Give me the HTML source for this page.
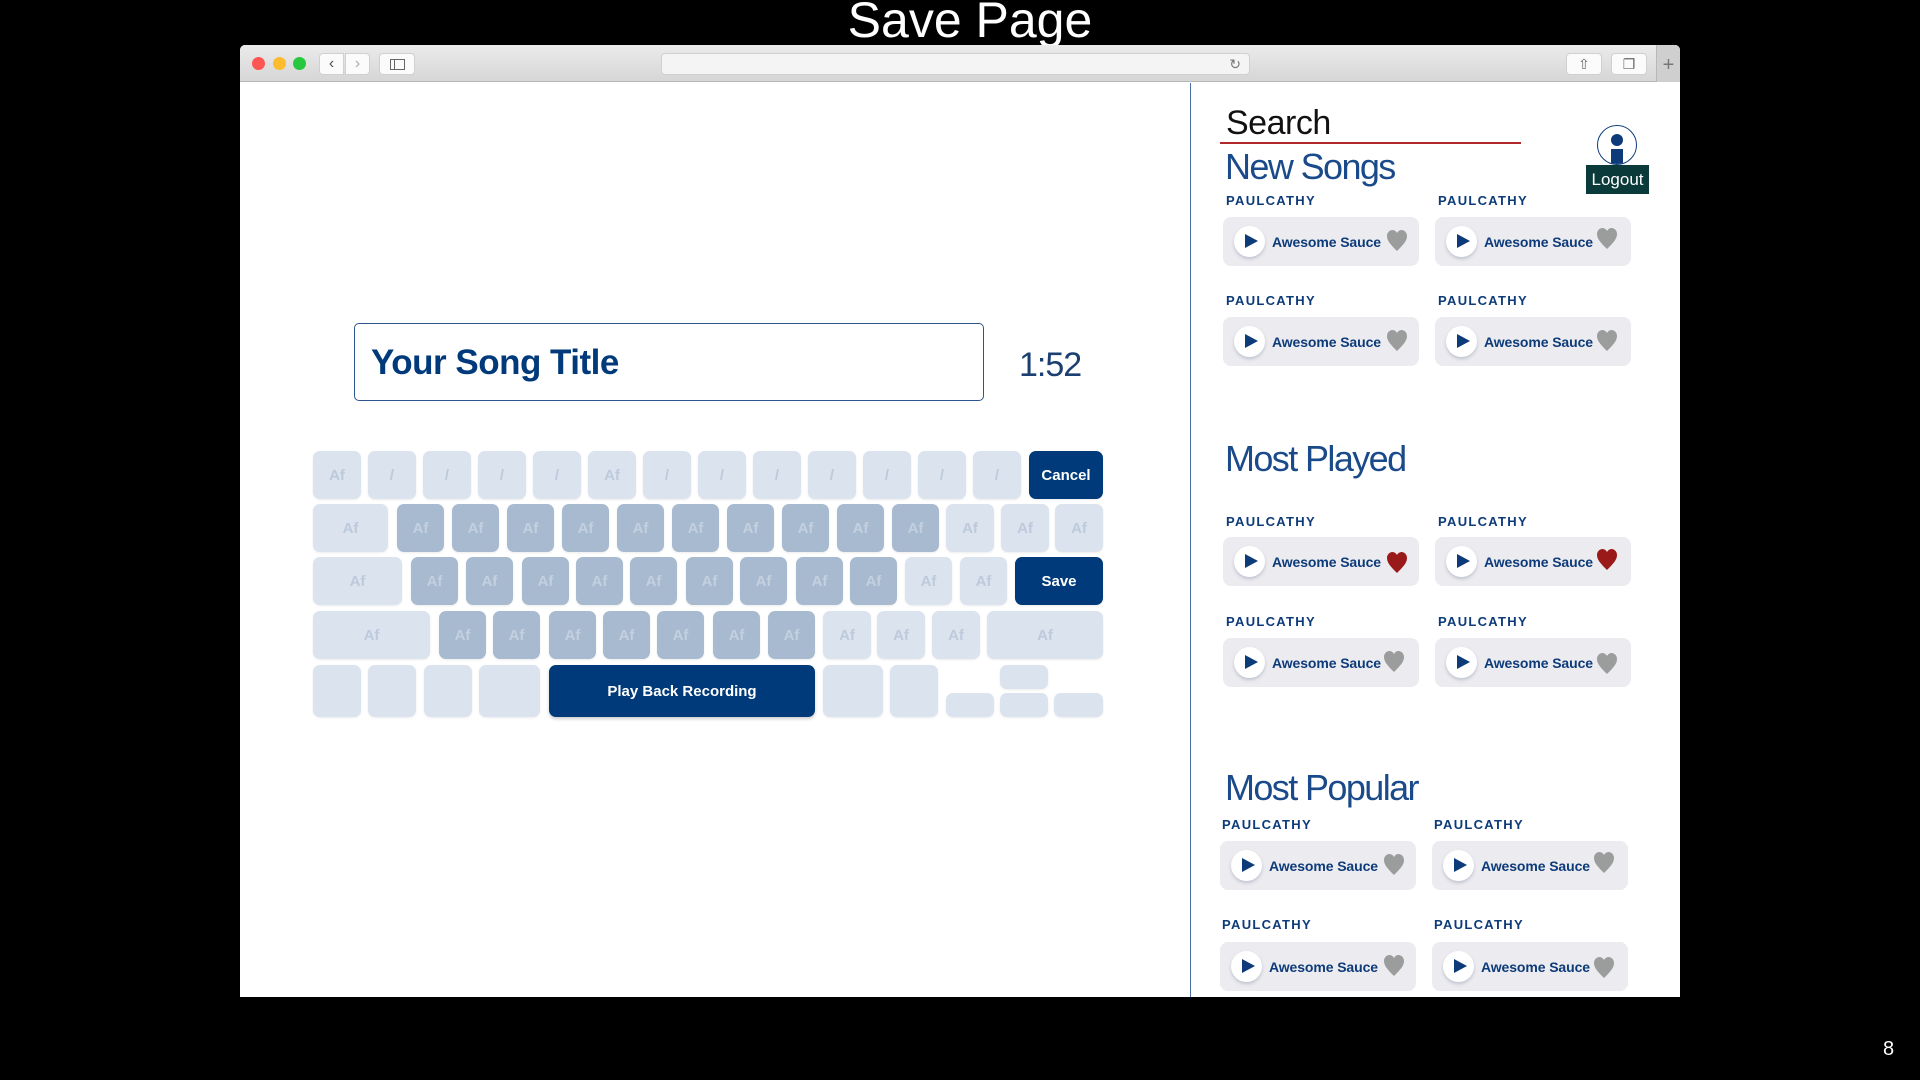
<!DOCTYPE html>
<html><head><meta charset="utf-8"><style>
*{margin:0;padding:0;box-sizing:border-box}
body{width:1920px;height:1080px;background:#000;position:relative;overflow:hidden;font-family:"Liberation Sans",Arial,sans-serif}
.a{position:absolute}
.title{left:0;width:1940px;text-align:center;top:-10px;font-size:50px;color:#fff;line-height:60px}
.win{left:240px;top:45px;width:1440px;height:952px;background:#fff;border-radius:5px 5px 0 0;overflow:hidden}
.tb{left:0;top:0;width:1440px;height:37px;background:linear-gradient(#ebebeb,#d6d6d6);border-bottom:1px solid #b8b8b8}
.dot{width:13px;height:13px;border-radius:50%;top:12px}
.btn{background:#fbfbfb;border:1px solid #d0d0d0;border-radius:4px;height:22px;top:8px}
.k{position:absolute;height:48px;border-radius:7px;background:#dbe3ee;color:#bdcadb;font-weight:bold;font-size:15px;display:flex;align-items:center;justify-content:center;box-shadow:0 1px 2px rgba(0,0,0,.08)}
.d{background:#a8bad0;color:#c3d0e0}
.n{background:#003a7a;color:#fff;font-size:15px}
.lab{font-size:13px;font-weight:bold;color:#0d3b7a;letter-spacing:1.3px;line-height:15px}
.card{width:196px;height:49px;background:#ecebef;border-radius:8px}
.pc{position:absolute;left:11px;top:9px;width:31px;height:31px;border-radius:50%;background:#fff;box-shadow:0 2px 3px rgba(60,80,120,.25)}
.pc:after{content:"";position:absolute;left:11px;top:8px;border-left:13px solid #0d3b7a;border-top:7.5px solid transparent;border-bottom:7.5px solid transparent}
.st{position:absolute;left:49px;top:17px;font-size:14px;font-weight:bold;color:#0d3b7a;line-height:17px;letter-spacing:-.1px}
.h{position:absolute;right:12px;top:13px}
.hd{font-size:36px;color:#1a4a8a;line-height:37px;letter-spacing:-1.6px}
</style></head><body>
<div class="a title">Save Page</div>
<div class="a win">
 <div class="a tb">
  <div class="a dot" style="left:12px;background:#fc5753"></div>
  <div class="a dot" style="left:33px;background:#fdbc2e"></div>
  <div class="a dot" style="left:53px;background:#27c840"></div>
  <div class="a btn" style="left:79px;width:25px;border-radius:4px 0 0 4px;color:#555;font-size:16px;text-align:center;line-height:19px">&#8249;</div>
  <div class="a btn" style="left:105px;width:25px;border-radius:0 4px 4px 0;color:#aaa;font-size:16px;text-align:center;line-height:19px">&#8250;</div>
  <div class="a btn" style="left:139px;width:36px"><div class="a" style="left:10px;top:5px;width:15px;height:11px;border:1px solid #666"></div><div class="a" style="left:14px;top:5px;width:1px;height:11px;background:#666"></div></div>
  <div class="a btn" style="left:421px;width:589px;background:#f4f4f4;color:#777;font-size:14px;text-align:right;padding-right:8px;line-height:20px">&#8635;</div>
  <div class="a btn" style="left:1326px;width:36px;text-align:center;color:#666;font-size:14px;line-height:20px">&#8679;</div>
  <div class="a btn" style="left:1371px;width:36px;text-align:center;color:#666;font-size:14px;line-height:20px">&#10064;</div>
  <div class="a" style="left:1416px;top:0;width:24px;height:37px;background:#cfcfcf;border-left:1px solid #b8b8b8;color:#777;font-size:20px;text-align:center;line-height:40px">+</div>
 </div>
 <div class="a" style="left:950px;top:38px;width:1px;height:914px;background:#4a6fa5"></div>
</div>

<div class="a" style="left:354px;top:323px;width:630px;height:78px;border:1.5px solid #2d5590;border-radius:5px"></div>
<div class="a" style="left:371px;top:343px;font-size:35px;font-weight:bold;color:#003a7a;line-height:40px;letter-spacing:-.5px">Your Song Title</div>
<div class="a" style="left:1019px;top:345px;font-size:34px;color:#1a3f70;line-height:40px;letter-spacing:-1px">1:52</div>

<!-- keyboard -->
<div class="k" style="left:313px;top:451px;width:48px">Af</div>
<div class="k" style="left:368px;top:451px;width:48px">/</div>
<div class="k" style="left:423px;top:451px;width:48px">/</div>
<div class="k" style="left:478px;top:451px;width:48px">/</div>
<div class="k" style="left:533px;top:451px;width:48px">/</div>
<div class="k" style="left:588px;top:451px;width:48px">Af</div>
<div class="k" style="left:643px;top:451px;width:48px">/</div>
<div class="k" style="left:698px;top:451px;width:48px">/</div>
<div class="k" style="left:753px;top:451px;width:48px">/</div>
<div class="k" style="left:808px;top:451px;width:48px">/</div>
<div class="k" style="left:863px;top:451px;width:48px">/</div>
<div class="k" style="left:918px;top:451px;width:48px">/</div>
<div class="k" style="left:973px;top:451px;width:48px">/</div>
<div class="k n" style="left:1029px;top:451px;width:74px">Cancel</div>

<div class="k" style="left:313px;top:504px;width:75px">Af</div>
<div class="k d" style="left:397px;top:504px;width:47px">Af</div>
<div class="k d" style="left:452px;top:504px;width:47px">Af</div>
<div class="k d" style="left:507px;top:504px;width:47px">Af</div>
<div class="k d" style="left:562px;top:504px;width:47px">Af</div>
<div class="k d" style="left:617px;top:504px;width:47px">Af</div>
<div class="k d" style="left:672px;top:504px;width:47px">Af</div>
<div class="k d" style="left:727px;top:504px;width:47px">Af</div>
<div class="k d" style="left:782px;top:504px;width:47px">Af</div>
<div class="k d" style="left:837px;top:504px;width:47px">Af</div>
<div class="k d" style="left:892px;top:504px;width:47px">Af</div>
<div class="k" style="left:946px;top:504px;width:48px">Af</div>
<div class="k" style="left:1001px;top:504px;width:48px">Af</div>
<div class="k" style="left:1055px;top:504px;width:48px">Af</div>

<div class="k" style="left:313px;top:557px;width:89px">Af</div>
<div class="k d" style="left:411px;top:557px;width:47px">Af</div>
<div class="k d" style="left:466px;top:557px;width:47px">Af</div>
<div class="k d" style="left:522px;top:557px;width:47px">Af</div>
<div class="k d" style="left:576px;top:557px;width:47px">Af</div>
<div class="k d" style="left:630px;top:557px;width:47px">Af</div>
<div class="k d" style="left:686px;top:557px;width:47px">Af</div>
<div class="k d" style="left:740px;top:557px;width:47px">Af</div>
<div class="k d" style="left:796px;top:557px;width:47px">Af</div>
<div class="k d" style="left:850px;top:557px;width:47px">Af</div>
<div class="k" style="left:905px;top:557px;width:47px">Af</div>
<div class="k" style="left:960px;top:557px;width:47px">Af</div>
<div class="k n" style="left:1015px;top:557px;width:88px">Save</div>

<div class="k" style="left:313px;top:611px;width:117px">Af</div>
<div class="k d" style="left:439px;top:611px;width:47px">Af</div>
<div class="k d" style="left:493px;top:611px;width:47px">Af</div>
<div class="k d" style="left:549px;top:611px;width:47px">Af</div>
<div class="k d" style="left:603px;top:611px;width:47px">Af</div>
<div class="k d" style="left:657px;top:611px;width:47px">Af</div>
<div class="k d" style="left:713px;top:611px;width:47px">Af</div>
<div class="k d" style="left:768px;top:611px;width:47px">Af</div>
<div class="k" style="left:823px;top:611px;width:48px">Af</div>
<div class="k" style="left:877px;top:611px;width:48px">Af</div>
<div class="k" style="left:932px;top:611px;width:48px">Af</div>
<div class="k" style="left:987px;top:611px;width:116px">Af</div>

<div class="k" style="left:313px;top:665px;width:48px;height:52px"></div>
<div class="k" style="left:368px;top:665px;width:48px;height:52px"></div>
<div class="k" style="left:424px;top:665px;width:48px;height:52px"></div>
<div class="k" style="left:479px;top:665px;width:61px;height:52px"></div>
<div class="k n" style="left:549px;top:665px;width:266px;height:52px;box-shadow:0 2px 3px rgba(0,0,0,.2)">Play Back Recording</div>
<div class="k" style="left:823px;top:665px;width:60px;height:52px"></div>
<div class="k" style="left:890px;top:665px;width:48px;height:52px"></div>
<div class="k" style="left:1000px;top:665px;width:48px;height:24px"></div>
<div class="k" style="left:946px;top:693px;width:48px;height:24px"></div>
<div class="k" style="left:1000px;top:693px;width:48px;height:24px"></div>
<div class="k" style="left:1054px;top:693px;width:49px;height:24px"></div>

<!-- right panel -->
<div class="a" style="left:1226px;top:106px;font-size:34px;color:#111;line-height:35px;letter-spacing:-.5px">Search</div>
<div class="a" style="left:1220px;top:142px;width:301px;height:2px;background:#b0282a"></div>
<div class="a hd" style="left:1225px;top:148px">New Songs</div>
<div class="a hd" style="left:1225px;top:440px">Most Played</div>
<div class="a hd" style="left:1225px;top:769px">Most Popular</div>

<div class="a" style="left:1597px;top:125px;width:40px;height:40px;border-radius:50%;border:1.5px solid #0d3b7a;background:#fff;overflow:hidden">
 <div class="a" style="left:13px;top:8px;width:12px;height:12px;border-radius:50%;background:#0d3b7a"></div>
 <div class="a" style="left:13px;top:23px;width:12px;height:20px;background:#0d3b7a"></div>
</div>
<div class="a" style="left:1586px;top:165px;width:63px;height:29px;background:#0a3a3a;color:#fff;font-size:17px;text-align:center;line-height:29px">Logout</div>

<!-- labels & cards -->
<div class="a lab" style="left:1226px;top:193px">PAULCATHY</div>
<div class="a lab" style="left:1438px;top:193px">PAULCATHY</div>
<div class="a lab" style="left:1226px;top:293px">PAULCATHY</div>
<div class="a lab" style="left:1438px;top:293px">PAULCATHY</div>
<div class="a lab" style="left:1226px;top:514px">PAULCATHY</div>
<div class="a lab" style="left:1438px;top:514px">PAULCATHY</div>
<div class="a lab" style="left:1226px;top:614px">PAULCATHY</div>
<div class="a lab" style="left:1438px;top:614px">PAULCATHY</div>
<div class="a lab" style="left:1222px;top:817px">PAULCATHY</div>
<div class="a lab" style="left:1434px;top:817px">PAULCATHY</div>
<div class="a lab" style="left:1222px;top:917px">PAULCATHY</div>
<div class="a lab" style="left:1434px;top:917px">PAULCATHY</div>

<svg width="0" height="0" style="position:absolute"><defs><path id="ht" d="M10 21 C4 15 0 11 0 6 C0 2.5 2.5 0 5.5 0 C7.5 0 9 1.2 10 3 C11 1.2 12.5 0 14.5 0 C17.5 0 20 2.5 20 6 C20 11 16 15 10 21Z"/></defs></svg>

<div class="a card" style="left:1223px;top:217px"><div class="pc"></div><div class="st">Awesome Sauce</div><svg class="h" width="20" height="22"><use href="#ht" fill="#9a9d9c"/></svg></div>
<div class="a card" style="left:1435px;top:217px"><div class="pc"></div><div class="st">Awesome Sauce</div><svg class="h" style="top:11px;right:14px" width="20" height="22"><use href="#ht" fill="#9a9d9c"/></svg></div>
<div class="a card" style="left:1223px;top:317px"><div class="pc"></div><div class="st">Awesome Sauce</div><svg class="h" width="20" height="22"><use href="#ht" fill="#9a9d9c"/></svg></div>
<div class="a card" style="left:1435px;top:317px"><div class="pc"></div><div class="st">Awesome Sauce</div><svg class="h" style="right:14px" width="20" height="22"><use href="#ht" fill="#9a9d9c"/></svg></div>

<div class="a card" style="left:1223px;top:537px"><div class="pc"></div><div class="st">Awesome Sauce</div><svg class="h" style="top:15px" width="20" height="22"><use href="#ht" fill="#9a1a1a"/></svg></div>
<div class="a card" style="left:1435px;top:537px"><div class="pc"></div><div class="st">Awesome Sauce</div><svg class="h" style="top:12px;right:14px" width="20" height="22"><use href="#ht" fill="#9a1a1a"/></svg></div>
<div class="a card" style="left:1223px;top:638px"><div class="pc"></div><div class="st">Awesome Sauce</div><svg class="h" style="right:15px" width="20" height="22"><use href="#ht" fill="#9a9d9c"/></svg></div>
<div class="a card" style="left:1435px;top:638px"><div class="pc"></div><div class="st">Awesome Sauce</div><svg class="h" style="top:15px;right:14px" width="20" height="22"><use href="#ht" fill="#9a9d9c"/></svg></div>

<div class="a card" style="left:1220px;top:841px"><div class="pc"></div><div class="st">Awesome Sauce</div><svg class="h" width="20" height="22"><use href="#ht" fill="#9a9d9c"/></svg></div>
<div class="a card" style="left:1432px;top:841px"><div class="pc"></div><div class="st">Awesome Sauce</div><svg class="h" style="top:11px;right:14px" width="20" height="22"><use href="#ht" fill="#9a9d9c"/></svg></div>
<div class="a card" style="left:1220px;top:942px"><div class="pc"></div><div class="st">Awesome Sauce</div><svg class="h" width="20" height="22"><use href="#ht" fill="#9a9d9c"/></svg></div>
<div class="a card" style="left:1432px;top:942px"><div class="pc"></div><div class="st">Awesome Sauce</div><svg class="h" style="top:15px;right:14px" width="20" height="22"><use href="#ht" fill="#9a9d9c"/></svg></div>

<div class="a" style="left:1883px;top:1038px;color:#fff;font-size:20px">8</div>
</body></html>
